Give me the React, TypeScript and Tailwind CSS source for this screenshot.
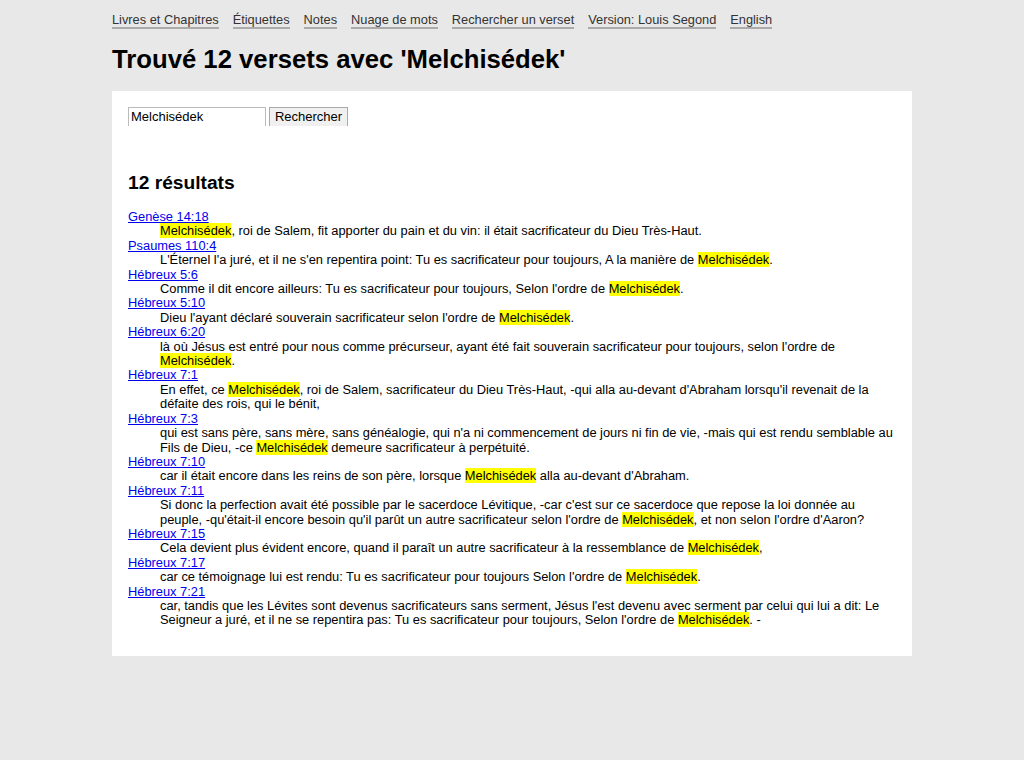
import React from "react";

const nav = [
  "Livres et Chapitres",
  "Étiquettes",
  "Notes",
  "Nuage de mots",
  "Rechercher un verset",
  "Version: Louis Segond",
  "English",
];

type R = { ref: string; parts: string[] };
const results: R[] = [
  { ref: "Genèse 14:18", parts: ["", ", roi de Salem, fit apporter du pain et du vin: il était sacrificateur du Dieu Très-Haut."] },
  { ref: "Psaumes 110:4", parts: ["L'Éternel l'a juré, et il ne s'en repentira point: Tu es sacrificateur pour toujours, A la manière de ", "."] },
  { ref: "Hébreux 5:6", parts: ["Comme il dit encore ailleurs: Tu es sacrificateur pour toujours, Selon l'ordre de ", "."] },
  { ref: "Hébreux 5:10", parts: ["Dieu l'ayant déclaré souverain sacrificateur selon l'ordre de ", "."] },
  { ref: "Hébreux 6:20", parts: ["là où Jésus est entré pour nous comme précurseur, ayant été fait souverain sacrificateur pour toujours, selon l'ordre de ", "."] },
  { ref: "Hébreux 7:1", parts: ["En effet, ce ", ", roi de Salem, sacrificateur du Dieu Très-Haut, -qui alla au-devant d'Abraham lorsqu'il revenait de la défaite des rois, qui le bénit,"] },
  { ref: "Hébreux 7:3", parts: ["qui est sans père, sans mère, sans généalogie, qui n'a ni commencement de jours ni fin de vie, -mais qui est rendu semblable au Fils de Dieu, -ce ", " demeure sacrificateur à perpétuité."] },
  { ref: "Hébreux 7:10", parts: ["car il était encore dans les reins de son père, lorsque ", " alla au-devant d'Abraham."] },
  { ref: "Hébreux 7:11", parts: ["Si donc la perfection avait été possible par le sacerdoce Lévitique, -car c'est sur ce sacerdoce que repose la loi donnée au peuple, -qu'était-il encore besoin qu'il parût un autre sacrificateur selon l'ordre de ", ", et non selon l'ordre d'Aaron?"] },
  { ref: "Hébreux 7:15", parts: ["Cela devient plus évident encore, quand il paraît un autre sacrificateur à la ressemblance de ", ","] },
  { ref: "Hébreux 7:17", parts: ["car ce témoignage lui est rendu: Tu es sacrificateur pour toujours Selon l'ordre de ", "."] },
  { ref: "Hébreux 7:21", parts: ["car, tandis que les Lévites sont devenus sacrificateurs sans serment, Jésus l'est devenu avec serment par celui qui lui a dit: Le Seigneur a juré, et il ne se repentira pas: Tu es sacrificateur pour toujours, Selon l'ordre de ", ". -"] },
];

export default function App() {
  return (
    <div
      className="min-h-[760px] bg-[#e8e8e8] text-black"
      style={{ fontFamily: '"Liberation Sans", Arial, sans-serif' }}
    >
      <div className="mx-auto w-[800px]">
        <nav className="flex gap-[14px] pt-[12px] text-[12.8px] leading-[15px] text-[#333]">
          {nav.map((n) => (
            <a key={n} href="#" className="border-b-2 border-[#aaa]">
              {n}
            </a>
          ))}
        </nav>
        <h1 className="mt-[15px] text-[25.7px] font-bold leading-[30px]">
          Trouvé 12 versets avec 'Melchisédek'
        </h1>
        <div className="mt-[17px] bg-white px-4 pt-4 pb-[28px]">
          <div className="flex h-[19px] items-start gap-[3px] overflow-hidden">
            <input
              defaultValue="Melchisédek"
              className="h-[22px] w-[138px] border border-[#bbb] px-[2px] pb-[3px] text-[13px] leading-[15px] outline-none"
              style={{ fontFamily: '"Liberation Sans", Arial, sans-serif' }}
            />
            <button
              className="h-[22px] w-[79px] border border-[#aaa] bg-[#f0f0f0] pb-[4px] text-[13px] leading-[15px]"
              style={{ fontFamily: '"Liberation Sans", Arial, sans-serif' }}
            >
              Rechercher
            </button>
          </div>
          <h2 className="mt-[46px] text-[19.2px] font-bold leading-[22px]">12 résultats</h2>
          <dl className="mt-[16px] text-[12.85px] leading-[14.4px]">
            {results.map((r) => (
              <React.Fragment key={r.ref}>
                <dt>
                  <a href="#" className="text-[#0000ee] underline">
                    {r.ref}
                  </a>
                </dt>
                <dd className="ml-8">
                  {r.parts[0]}
                  <span className="bg-[#ffff00]">Melchisédek</span>
                  {r.parts[1]}
                </dd>
              </React.Fragment>
            ))}
          </dl>
        </div>
      </div>
    </div>
  );
}
